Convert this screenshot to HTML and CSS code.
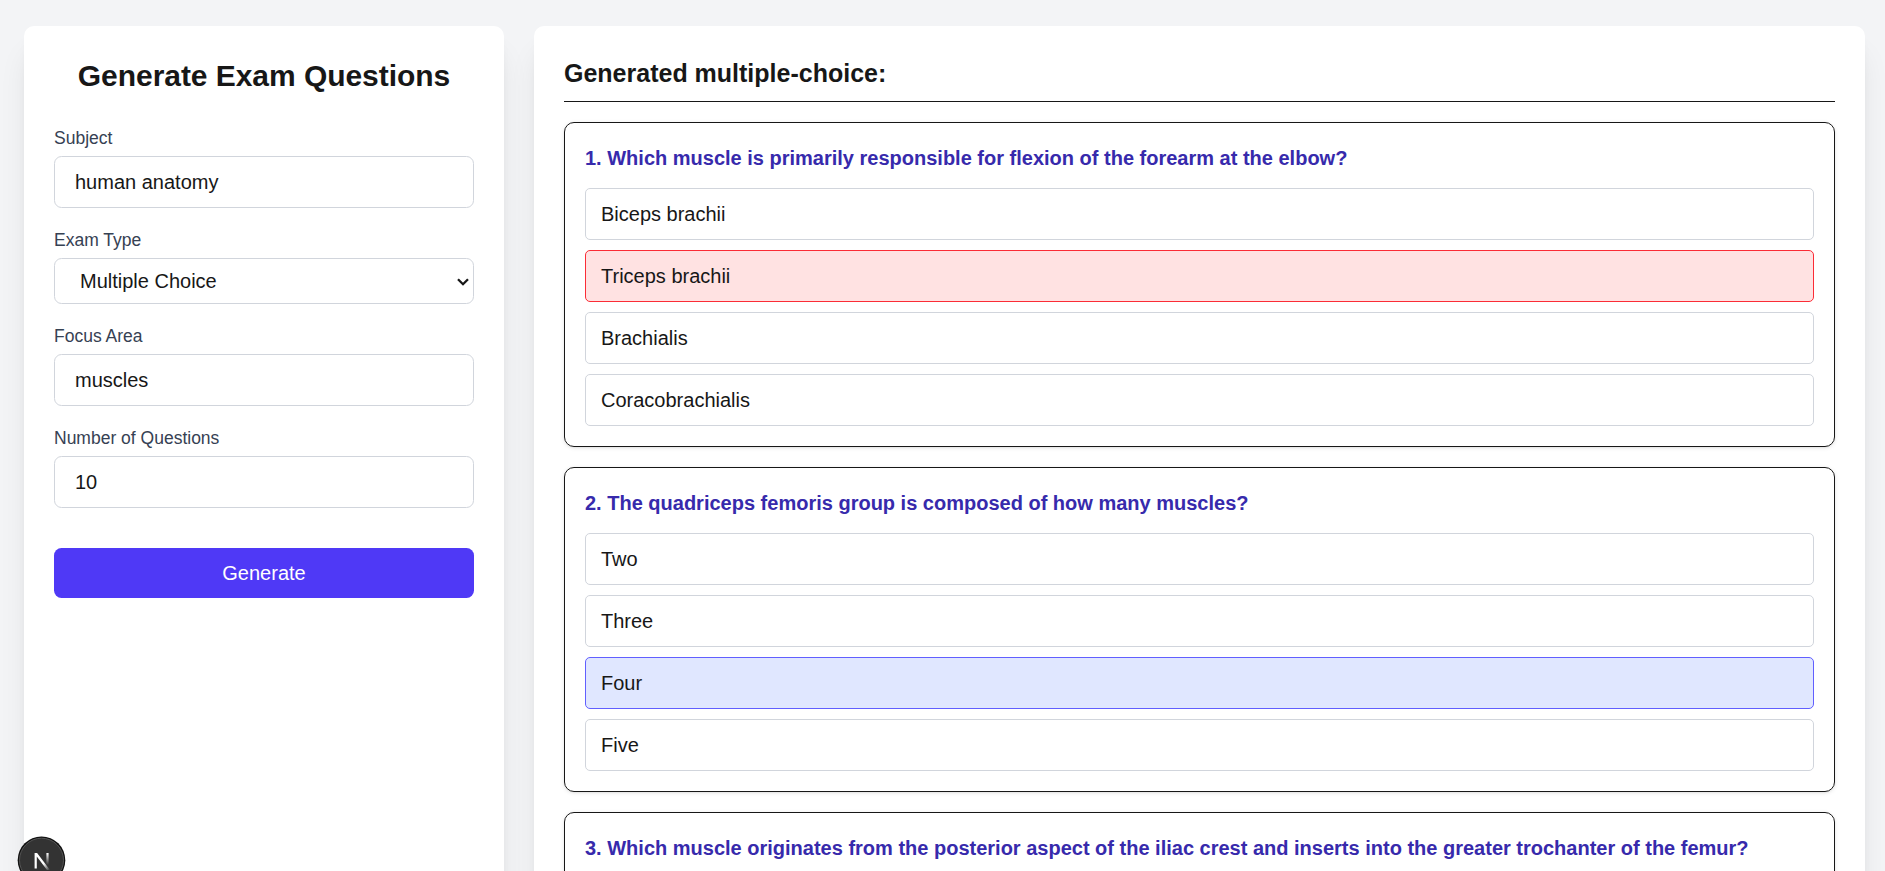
FILE: index.html
```html
<!DOCTYPE html>
<html lang="en">
<head>
<meta charset="utf-8">
<title>Generate Exam Questions</title>
<link rel="stylesheet" href="styles.css">
</head>
<body>
<main class="page">
  <section class="card form-card">
    <h1 class="title">Generate Exam Questions</h1>
    <form class="form">
      <div class="field">
        <label class="label" for="subject">Subject</label>
        <input class="input" id="subject" type="text" value="human anatomy">
      </div>
      <div class="field">
        <label class="label" for="type">Exam Type</label>
        <div class="select-wrap">
          <select class="input select" id="type"><option>Multiple Choice</option></select>
          <svg class="chevron" width="14" height="10" viewBox="0 0 14 10"><path d="M2 2.2 7 7.2 12 2.2" fill="none" stroke="#171717" stroke-width="2.3"/></svg>
        </div>
      </div>
      <div class="field">
        <label class="label" for="focus">Focus Area</label>
        <input class="input" id="focus" type="text" value="muscles">
      </div>
      <div class="field">
        <label class="label" for="count">Number of Questions</label>
        <input class="input" id="count" type="text" value="10">
      </div>
      <button class="submit" type="button">Generate</button>
    </form>
  </section>

  <section class="card results">
    <h2 class="results-title">Generated multiple-choice:</h2>
    <article class="question">
      <h3 class="prompt">1. Which muscle is primarily responsible for flexion of the forearm at the elbow?</h3>
      <ul class="options">
        <li class="option">Biceps brachii</li>
        <li class="option option-wrong">Triceps brachii</li>
        <li class="option">Brachialis</li>
        <li class="option">Coracobrachialis</li>
      </ul>
    </article>
    <article class="question">
      <h3 class="prompt">2. The quadriceps femoris group is composed of how many muscles?</h3>
      <ul class="options">
        <li class="option">Two</li>
        <li class="option">Three</li>
        <li class="option option-selected">Four</li>
        <li class="option">Five</li>
      </ul>
    </article>
    <article class="question">
      <h3 class="prompt">3. Which muscle originates from the posterior aspect of the iliac crest and inserts into the greater trochanter of the femur?</h3>
    </article>
  </section>
</main>

<div class="dev-badge">
  <svg width="50" height="36" viewBox="0 0 50 36">
    <defs>
      <linearGradient id="diag" x1="0" y1="0" x2="1" y2="1"><stop offset=".6" stop-color="#fff"/><stop offset="1" stop-color="#fff" stop-opacity="0"/></linearGradient>
      <linearGradient id="stem" x1="0" y1="0" x2="0" y2="1"><stop offset="0" stop-color="#fff"/><stop offset="1" stop-color="#fff" stop-opacity="0"/></linearGradient>
    </defs>
    <circle cx="24.5" cy="25.2" r="23.8" fill="#111"/>
    <circle cx="24.5" cy="25.2" r="22" fill="#333" stroke="#555" stroke-width="1"/>
    <path d="M17.6 33.5V18h2.5L33 35h-3L19.8 21.5v12z" fill="url(#diag)"/>
    <rect x="29.4" y="18" width="2.2" height="12" fill="url(#stem)"/>
  </svg>
</div>
</body>
</html>
```
FILE: styles.css
```css
* { box-sizing: border-box; margin: 0; padding: 0; }

body {
  background: #f3f4f6;
  color: #171717;
  font: 20px/30px Arial, "Liberation Sans", sans-serif;
}

.page {
  display: grid;
  grid-template-columns: 480px 1fr;
  grid-template-rows: 1200px;
  gap: 30px;
  height: 871px;
  overflow: hidden;
  padding: 26px 20px 0 24px;
}

.card {
  padding: 30px;
  border-radius: 10px;
  background: #fff;
  box-shadow: 0 25px 31.25px -6.25px rgba(0, 0, 0, .1), 0 10px 12.5px -7.5px rgba(0, 0, 0, .1);
}

.title {
  margin-bottom: 30px;
  font-size: 30px;
  letter-spacing: -.05px;
  line-height: 40px;
  text-align: center;
}

.form { display: flex; flex-direction: column; gap: 20px; }
.field { display: flex; flex-direction: column; gap: 5px; }

.label {
  color: #364153;
  font-size: 17.5px;
  line-height: 25px;
}

.input {
  width: 100%;
  height: 52px;
  padding: 0 20px;
  border: 1px solid #d1d5dc;
  border-radius: 7.5px;
  background: #fff;
  color: inherit;
  font: inherit;
}

.select-wrap { position: relative; height: 46px; }
.select { height: 46px; padding: 0 25px; appearance: none; }
.chevron { position: absolute; top: 19px; right: 4px; }

.submit {
  height: 50px;
  margin-top: 20px;
  border: 0;
  border-radius: 7.5px;
  background: #4f39f6;
  color: #fff;
  font: inherit;
}

.results { display: flex; flex-direction: column; gap: 20px; }

.results-title {
  padding-bottom: 10px;
  border-bottom: 1px solid #171717;
  font-size: 25px;
  line-height: 35px;
}

.question {
  padding: 20px;
  border: 1px solid #171717;
  border-radius: 10px;
  box-shadow: 0 1px 4px rgba(0, 0, 0, .1), 0 1px 2.5px -1px rgba(0, 0, 0, .1);
}

.prompt {
  margin-bottom: 15px;
  color: #372aac;
  font-size: 20px;
  line-height: 30px;
}

.options { display: flex; flex-direction: column; gap: 10px; list-style: none; }

.option {
  padding: 10px 15px;
  border: 1px solid #d1d5dc;
  border-radius: 5px;
}
.option-wrong { border-color: #fb2c36; background: #ffe2e2; }
.option-selected { border-color: #615fff; background: #e0e7ff; }

.dev-badge {
  position: absolute;
  top: 835px;
  left: 17px;
  width: 50px;
  height: 36px;
  overflow: hidden;
}
```
